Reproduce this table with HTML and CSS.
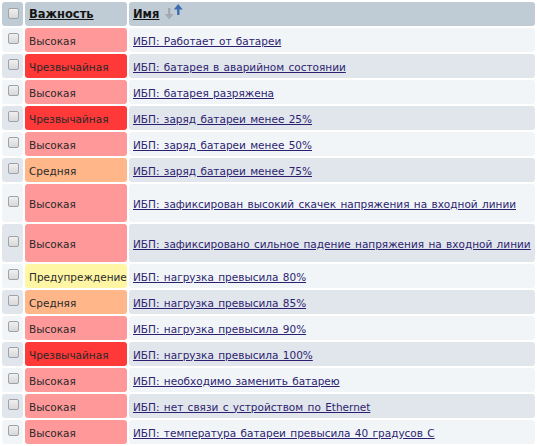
FILE: index.html
```
<!DOCTYPE html>
<html lang="ru">
<head>
<meta charset="utf-8">
<title>Триггеры</title>
<link rel="stylesheet" href="styles.css">
</head>
<body>
<table class="grid">
  <thead>
    <tr>
      <th class="c-check"><span class="cb"></span></th>
      <th class="c-sev"><a href="#" class="hlink">Важность</a></th>
      <th class="c-name"><a href="#" class="hlink">Имя</a><svg class="sort" width="18" height="16" viewBox="0 0 18 16"><path d="M3 4h2.4v6h3.2l-4.4 5.5l-4.4-5.5h3.2z" fill="#a4a9ad"/><path d="M13.2 0l4.6 5.5h-3.3v5.5h-2.4v-5.5h-3.3z" fill="#3d6db0"/></svg></th>
    </tr>
  </thead>
  <tbody>
    <tr class="odd"><td class="c-check"><span class="cb"></span></td><td class="sev high">Высокая</td><td class="c-name"><a href="#">ИБП: Работает от батареи</a></td></tr>
    <tr class="even"><td class="c-check"><span class="cb"></span></td><td class="sev disaster">Чрезвычайная</td><td class="c-name"><a href="#">ИБП: батарея в аварийном состоянии</a></td></tr>
    <tr class="odd"><td class="c-check"><span class="cb"></span></td><td class="sev high">Высокая</td><td class="c-name"><a href="#">ИБП: батарея разряжена</a></td></tr>
    <tr class="even"><td class="c-check"><span class="cb"></span></td><td class="sev disaster">Чрезвычайная</td><td class="c-name"><a href="#">ИБП: заряд батареи менее 25%</a></td></tr>
    <tr class="odd"><td class="c-check"><span class="cb"></span></td><td class="sev high">Высокая</td><td class="c-name"><a href="#">ИБП: заряд батареи менее 50%</a></td></tr>
    <tr class="even"><td class="c-check"><span class="cb"></span></td><td class="sev average">Средняя</td><td class="c-name"><a href="#">ИБП: заряд батареи менее 75%</a></td></tr>
    <tr class="odd tall"><td class="c-check"><span class="cb"></span></td><td class="sev high">Высокая</td><td class="c-name"><a href="#">ИБП: зафиксирован высокий скачек напряжения на входной линии</a></td></tr>
    <tr class="even tall"><td class="c-check"><span class="cb"></span></td><td class="sev high">Высокая</td><td class="c-name"><a href="#">ИБП: зафиксировано сильное падение напряжения на входной линии</a></td></tr>
    <tr class="odd"><td class="c-check"><span class="cb"></span></td><td class="sev warning">Предупреждение</td><td class="c-name"><a href="#">ИБП: нагрузка превысила 80%</a></td></tr>
    <tr class="even"><td class="c-check"><span class="cb"></span></td><td class="sev average">Средняя</td><td class="c-name"><a href="#">ИБП: нагрузка превысила 85%</a></td></tr>
    <tr class="odd"><td class="c-check"><span class="cb"></span></td><td class="sev high">Высокая</td><td class="c-name"><a href="#">ИБП: нагрузка превысила 90%</a></td></tr>
    <tr class="even"><td class="c-check"><span class="cb"></span></td><td class="sev disaster">Чрезвычайная</td><td class="c-name"><a href="#">ИБП: нагрузка превысила 100%</a></td></tr>
    <tr class="odd"><td class="c-check"><span class="cb"></span></td><td class="sev high">Высокая</td><td class="c-name"><a href="#">ИБП: необходимо заменить батарею</a></td></tr>
    <tr class="even"><td class="c-check"><span class="cb"></span></td><td class="sev high">Высокая</td><td class="c-name"><a href="#">ИБП: нет связи с устройством по Ethernet</a></td></tr>
    <tr class="odd"><td class="c-check"><span class="cb"></span></td><td class="sev high">Высокая</td><td class="c-name"><a href="#">ИБП: температура батареи превысила 40 градусов C</a></td></tr>
  </tbody>
</table>
</body>
</html>
```

FILE: styles.css
```
html, body {
  margin: 0;
  padding: 0;
  background: #ffffff;
}
body {
  font-family: "DejaVu Sans", Verdana, sans-serif;
  font-size: 10.5px;
  color: #2a2a2a;
}
.grid {
  width: 537px;
  border-collapse: separate;
  border-spacing: 2px;
  table-layout: fixed;
}
.grid th, .grid td {
  height: 24px;
  padding: 0 4px;
  box-sizing: border-box;
  border-radius: 3px;
  vertical-align: middle;
  text-align: left;
  white-space: nowrap;
  line-height: 14px;
}
.grid td {
  padding-top: 1px;
}
.grid th {
  background: #c0ccd5;
  font-weight: bold;
  font-size: 11.5px;
}
.grid tr.tall td {
  height: 38px;
}
.c-check {
  width: 21px;
  padding: 0 !important;
  text-align: center !important;
}
.c-sev {
  width: 102px;
}
.odd td.c-check, .odd td.c-name { background: #f1f5f8; }
.even td.c-check, .even td.c-name { background: #e1e5ec; }
.sev.high { background: #ff9999; }
.sev.disaster { background: #ff3838; }
.sev.average { background: #ffb689; }
.sev.warning { background: #fff6a5; }
.c-name a {
  word-spacing: 1px;
}
.cb {
  display: inline-block;
  width: 11px;
  height: 11px;
  box-sizing: border-box;
  border: 1px solid #9fa3a7;
  border-radius: 2px;
  background: linear-gradient(#f0f0f0, #d8d8d8);
  vertical-align: middle;
  position: relative;
  top: -3px;
  margin-left: 1px;
}
th .cb { top: -1px; }
a {
  color: #2d1f6f;
  text-decoration: underline;
}
.hlink {
  color: #141414;
}
.sort {
  vertical-align: middle;
  margin-left: 6px;
  position: relative;
  top: -2px;
}
```
